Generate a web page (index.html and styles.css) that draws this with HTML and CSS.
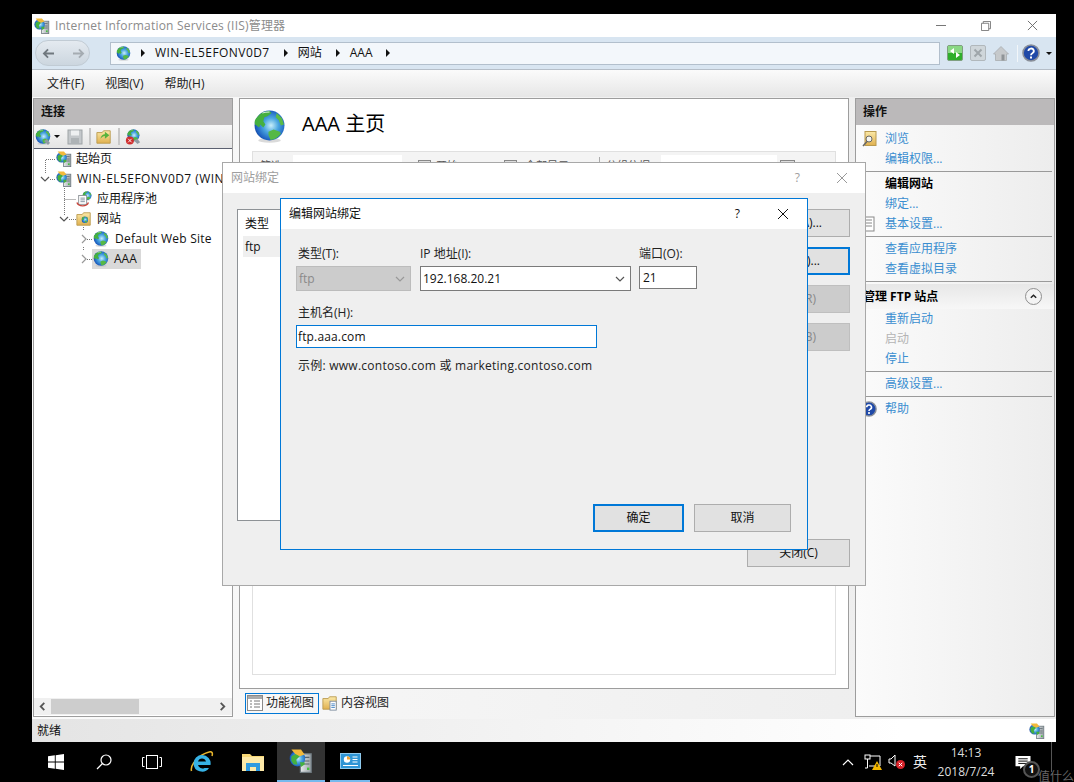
FILE: index.html
```html
<!DOCTYPE html>
<html lang="zh-CN">
<head>
<meta charset="utf-8">
<title>IIS</title>
<link rel="stylesheet" href="styles.css">
</head>
<body>
<svg class="defs" width="0" height="0" aria-hidden="true">
  <defs>
    <radialGradient id="gb" cx="0.55" cy="0.5" r="0.62">
      <stop offset="0" stop-color="#c8eef9"/><stop offset="0.4" stop-color="#4aa6e0"/><stop offset="0.8" stop-color="#1c5fc0"/><stop offset="1" stop-color="#12307e"/>
    </radialGradient>
    <linearGradient id="gf" x1="0" y1="0" x2="0" y2="1">
      <stop offset="0" stop-color="#fbe9a8"/><stop offset="1" stop-color="#e0b04e"/>
    </linearGradient>
    <linearGradient id="gs" x1="0" y1="0" x2="1" y2="0">
      <stop offset="0" stop-color="#e6eaec"/><stop offset="1" stop-color="#9aa2a6"/>
    </linearGradient>
    <symbol id="globe" viewBox="0 0 32 32">
      <ellipse cx="16" cy="29.500" rx="11" ry="2.200" fill="#bbb" opacity=".55"/>
      <circle cx="16" cy="15" r="14.500" fill="url(#gb)"/>
      <path d="M4 7c3-4 7-6 12-6l2 2-4 3-3 1-1 4 2 3-2 3-3-3-1 3-4-3C1 11 2 9 4 7z" fill="#45b03f"/>
      <path d="M15 21l5-2 6 2 1 2c-3 4-7 6-10 6l-2-5z" fill="#55b845"/>
      <path d="M23 3l5 5 2 6-3 1-2-5-3-3z" fill="#5abb47"/>
      <path d="M9 3c2-1 5-1 7-1" stroke="#d8f2e0" stroke-width="1" fill="none"/>
    </symbol>
    <symbol id="server" viewBox="0 0 20 20">
      <rect x="9.500" y="4" width="9" height="15.500" fill="url(#gs)" stroke="#6f7a80"/>
      <path d="M11 7h6M11 10h6M11 12.500h6" stroke="#59646b"/>
      <rect x="15" y="15.500" width="2" height="2" fill="#46c13e"/>
      <circle cx="7" cy="8" r="6.500" fill="url(#gb)"/>
      <path d="M2 6l4-2 3 2-3 3 1 4-3 0-2-3z" fill="#45b03f"/>
      <path d="M9 11l4 0 0 2-3 2z" fill="#45b03f"/>
      <path d="M2 0.500h8l3 4-4 1.500-4-2z" fill="#f3b93a"/>
    </symbol>
    <symbol id="folder" viewBox="0 0 18 18">
      <path d="M1 4h6l1.500-2H16v14H1z" fill="url(#gf)" stroke="#b99a4e"/>
    </symbol>
    <symbol id="close" viewBox="0 0 12 12">
      <path d="M1 1l10 10M11 1L1 11" fill="none" stroke="currentColor"/>
    </symbol>
    <symbol id="chev" viewBox="0 0 10 10">
      <path d="M1 3l4 4 4-4" fill="none" stroke="currentColor" stroke-width="1.200"/>
    </symbol>
    <symbol id="help" viewBox="0 0 18 18">
      <circle cx="9" cy="9" r="8" fill="#1f49a8" stroke="#8a8f98" stroke-width="1.600"/>
      <path d="M6.400 7a2.700 2.500 0 1 1 4 2.200C9.400 9.800 9 10.300 9 11.300" fill="none" stroke="#fff" stroke-width="1.800"/>
      <rect x="8" y="12.500" width="2" height="2" fill="#fff"/>
    </symbol>
  </defs>
</svg>

<div class="desktop">
  <main class="window">
    <header class="titlebar">
      <svg class="ico16"><use href="#server"/></svg>
      <span class="title-text">Internet Information Services (IIS)管理器</span>
      <div class="win-btns">
        <span class="min"></span>
        <svg class="restore" viewBox="0 0 11 11"><path d="M.5 2.500h8v8h-8zM2.500 2.500v-2h8v8h-2" fill="none" stroke="#777"/></svg>
        <svg class="x-btn"><use href="#close"/></svg>
      </div>
    </header>

    <nav class="navbar">
      <div class="backfwd">
        <svg viewBox="0 0 14 12" class="arrow"><path d="M13 6H2M6.500 1.500L2 6l4.500 4.500" fill="none" stroke="#70787f" stroke-width="2"/></svg>
        <svg viewBox="0 0 14 12" class="arrow"><path d="M1 6h11M7.500 1.500L12 6l-4.500 4.500" fill="none" stroke="#a5acb2" stroke-width="2"/></svg>
      </div>
      <div class="addr">
        <svg class="ico16 g"><use href="#globe"/></svg>
        <i class="tri"></i><span class="wide">WIN-EL5EFONV0D7</span>
        <i class="tri"></i><span>网站</span>
        <i class="tri"></i><span>AAA</span>
        <i class="tri"></i>
      </div>
      <div class="nav-tools">
        <svg class="tool" viewBox="0 0 16 16"><rect x=".5" y=".5" width="15" height="15" rx="1.500" fill="#2fae2b" stroke="#7f9f80"/><rect x="1" y="1" width="14" height="7" fill="#8ad884"/><path d="M7 3L3 6l4 3zM9 7l4 3-4 3z" fill="#fff"/></svg>
        <svg class="tool" viewBox="0 0 16 16"><rect x=".5" y=".5" width="15" height="15" rx="1.500" fill="#cfd6da" stroke="#b1b8bc"/><path d="M4.500 4.500l7 7M11.500 4.500l-7 7" stroke="#9fa6aa" stroke-width="2"/></svg>
        <svg class="tool home" viewBox="0 0 16 16"><path d="M8 1L0.500 8.500 2.500 8.500V15h11V8.500h2z" fill="#c6c9cb" stroke="#a9adb0" stroke-width=".8"/><rect x="8.500" y="9" width="3" height="6" fill="#8f9497"/></svg>
        <i class="tool-sep"></i>
        <svg class="help-nav"><use href="#help"/></svg>
        <i class="drop"></i>
      </div>
    </nav>

    <div class="menubar"><span>文件(F)</span><span>视图(V)</span><span>帮助(H)</span></div>

    <div class="workspace">
      <section class="left">
        <h2 class="panel-head">连接</h2>
        <div class="left-tools">
          <svg class="ico16"><use href="#globe"/><path d="M9 12l3-2 3 4-2 2z" fill="#8f9aa3"/></svg><i class="drop small"></i>
          <svg class="ico16 disk" viewBox="0 0 16 16"><rect x="1" y="1" width="14" height="14" fill="#c4c8cb" stroke="#9ea3a6"/><rect x="4" y="1.500" width="8" height="5" fill="#eef0f1"/><rect x="4" y="9" width="8" height="6" fill="#aeb3b6"/></svg>
          <i class="tool-sep grey"></i>
          <svg class="ico16" viewBox="0 0 18 18"><use href="#folder"/><path d="M5 11c1-4 3-5 5-5V3l5 4-5 4V8c-2 0-3 1-5 3z" fill="#56b33d"/></svg>
          <i class="tool-sep grey"></i>
          <svg class="ico16 conn" viewBox="0 0 18 18"><use href="#globe" width="15" height="15" x="2"/><path d="M10 13l4-2 3 4-3 2z" fill="#8f9aa3"/><circle cx="5.500" cy="13" r="4.500" fill="#cf2d2d"/><path d="M3.500 11l4 4M7.500 11l-4 4" stroke="#fff"/></svg>
        </div>
        <div class="tree">
          <svg class="tree-lines" width="120" height="120"><path d="M11.500 24V10.500H22M16 30.500h6M30.500 37v30M30.500 50.500H42M35 70.500h7M49.500 78v4M49.500 98v4M53 90.500h5M53 110.500h5" fill="none" stroke="#777" stroke-dasharray="1 1"/></svg>
          <div class="row l0 nc"><svg class="ico16"><use href="#server"/></svg><span>起始页</span></div>
          <div class="row l0"><svg class="tw"><use href="#chev"/></svg><svg class="ico16"><use href="#server"/></svg><span class="wide">WIN-EL5EFONV0D7 (WIN-EL5EFONV0D7\Administrator)</span></div>
          <div class="row l1 nc"><svg class="ico16" viewBox="0 0 18 18"><use href="#globe" x="7" width="11" height="11"/><rect x="3" y="5" width="9" height="10" fill="#fff" stroke="#8a8f94"/><path d="M5 8h5M5 10h5M5 12h5" stroke="#7a8a9a"/><path d="M1 13c2 5 11 5 13 0" fill="none" stroke="#c9443b" stroke-width="1.500"/></svg><span>应用程序池</span></div>
          <div class="row l1"><svg class="tw"><use href="#chev"/></svg><svg class="ico16" viewBox="0 0 18 18"><use href="#folder"/><use href="#globe" x="6" y="6" width="8" height="8"/></svg><span>网站</span></div>
          <div class="row l2"><svg class="tw side"><use href="#chev"/></svg><svg class="ico16"><use href="#globe"/></svg><span class="lt">Default Web Site</span></div>
          <div class="row l2"><svg class="tw side"><use href="#chev"/></svg><span class="selected"><svg class="ico16"><use href="#globe"/></svg><span>AAA</span></span></div>
        </div>
        <div class="hscroll">
          <svg class="sc-arrow" viewBox="0 0 8 10"><path d="M6 1L2 5l4 4" fill="none" stroke="#555" stroke-width="2"/></svg>
          <div class="sc-track"><div class="sc-thumb"></div></div>
          <svg class="sc-arrow" viewBox="0 0 8 10"><path d="M2 1l4 4-4 4" fill="none" stroke="#555" stroke-width="2"/></svg>
        </div>
      </section>

      <section class="center">
        <div class="center-panel">
          <div class="home-head">
            <svg class="big-globe"><use href="#globe"/></svg>
            <h1>AAA 主页</h1>
          </div>
          <div class="feature-box">
            <div class="filter">
              <span class="f-a">筛选:</span><i class="filter-input"></i><i class="f-box"></i><span class="f-b">开始(G)</span><i class="f-box"></i><span class="f-c">全部显示(A)</span><i class="f-sep"></i><span class="f-d">分组依据:</span><i class="filter-input short"></i><i class="f-box"></i>
            </div>
          </div>
        </div>
        <div class="tabs">
          <span class="tab active"><svg class="ico16" viewBox="0 0 16 16"><rect x=".5" y=".5" width="15" height="15" fill="#fff" stroke="#8a8a8a"/><rect x="1" y="1" width="14" height="3" fill="#aaa"/><path d="M3 6h2M3 9h2M3 12h2M7 6h6M7 9h6M7 12h6" stroke="#777"/></svg>功能视图</span>
          <span class="tab"><svg class="ico16" viewBox="0 0 18 18"><use href="#folder"/><rect x="9" y="7" width="7" height="10" fill="#fff" stroke="#7b8a9c"/><path d="M10.500 10h4M10.500 12h4M10.500 14h4" stroke="#3e7fc1"/></svg>内容视图</span>
        </div>
      </section>

      <aside class="right">
        <h2 class="panel-head">操作</h2>
        <div class="actions">
          <div class="act link"><svg class="act-ico" viewBox="0 0 16 16"><rect x="4" y="0.500" width="11" height="14" fill="url(#gf)" stroke="#b99a4e"/><circle cx="8" cy="8" r="3" fill="#f5f5f0" stroke="#666"/><path d="M6 10.500L2 15" stroke="#666" stroke-width="1.500"/></svg>浏览</div>
          <div class="act link">编辑权限...</div>
          <hr>
          <div class="act strong">编辑网站</div>
          <div class="act link">绑定...</div>
          <div class="act link"><svg class="act-ico" viewBox="0 0 16 16"><rect x="2" y="1" width="11" height="14" fill="#fff" stroke="#888"/><path d="M4 4h7M4 7h7M4 10h7" stroke="#888"/></svg>基本设置...</div>
          <hr>
          <div class="act link">查看应用程序</div>
          <div class="act link">查看虚拟目录</div>
          <hr>
          <div class="group-head"><span>管理 FTP 站点</span><i class="collapse"><svg viewBox="0 0 10 10"><path d="M2 6.500l3-3 3 3" fill="none" stroke="#222" stroke-width="1.600"/></svg></i></div>
          <div class="act link">重新启动</div>
          <div class="act disabled">启动</div>
          <div class="act link">停止</div>
          <hr>
          <div class="act link">高级设置...</div>
          <hr>
          <div class="act link"><svg class="act-ico"><use href="#help"/></svg>帮助</div>
        </div>
      </aside>
    </div>

    <footer class="status">
      <span>就绪</span>
      <svg class="ico16"><use href="#server"/></svg>
    </footer>
  </main>

  <div class="taskbar">
    <span class="cell"><svg class="tb16" viewBox="0 0 16 16"><path d="M0 2.300l6.800-1v6.300H0zM7.700 1.200L16 0v7.600H7.700zM0 8.400h6.800v6.300l-6.800-1zM7.700 8.400H16V16l-8.300-1.200z" fill="#fff"/></svg></span>
    <span class="cell"><svg class="tb16" viewBox="0 0 16 16"><circle cx="10" cy="6" r="5" fill="none" stroke="#fff" stroke-width="1.200"/><path d="M6.500 9.500L1 15" stroke="#fff" stroke-width="1.200"/></svg></span>
    <span class="cell"><svg class="tb20" viewBox="0 0 20 16"><rect x="4.500" y="1.500" width="11" height="13" fill="none" stroke="#fff"/><path d="M2.500 3.500h-2v9h2M17.500 3.500h2v9h-2" fill="none" stroke="#fff"/></svg></span>
    <span class="cell c-ie"><svg class="tb24" viewBox="0 0 24 24"><path d="M1.500 21C0 15 8 5 19 2c3-1 4 1 3 4" fill="none" stroke="#e8b52c" stroke-width="1.500"/><path d="M12 5a8.500 8.500 0 0 0-8.500 8.500A8.500 8.500 0 0 0 19 18h-4.500a4.500 4.500 0 0 1-6.500-3h12.500A8.500 8.500 0 0 0 12 5zM8 11.500a4.200 4.200 0 0 1 8 0z" fill="#37b3e6" fill-rule="evenodd"/></svg></span>
    <span class="cell c50"><svg class="tb22" viewBox="0 0 22 20"><path d="M0 2h8l2 2h12v15H0z" fill="#f8d775"/><path d="M0 5h22v14H0z" fill="#fde9a8"/><path d="M4 11h14v8h-4v-4H8v4H4z" fill="#2f9be0"/></svg></span>
    <span class="cell active"><svg class="tb24"><use href="#server"/></svg></span>
    <span class="cell running"><svg class="tb-ctl" viewBox="0 0 21 16"><rect x=".5" y=".5" width="20" height="15" fill="#2f95d5" stroke="#8fcaee"/><circle cx="7" cy="6.500" r="3.200" fill="#fff"/><path d="M7 6.500V3.300A3.200 3.200 0 0 1 10.200 6.500z" fill="#f0a030"/><path d="M12.500 4h5M12.500 6.500h5M12.500 9h5M3 12.500h15" stroke="#fff"/></svg></span>
    <div class="tray">
      <svg class="tray-chev" viewBox="0 0 12 8"><path d="M1 7l5-5 5 5" fill="none" stroke="#fff" stroke-width="1.200"/></svg>
      <svg class="tray-ico net" viewBox="0 0 18 16"><path d="M1 2h15v10H5" fill="none" stroke="#fff"/><rect x="1" y="1" width="5" height="4" fill="#000" stroke="#fff"/><path d="M3.500 5v9H1" fill="none" stroke="#fff"/><path d="M13 7l5 9H8z" fill="#f5b800"/><path d="M13 10v3" stroke="#000"/></svg>
      <svg class="tray-ico vol" viewBox="0 0 18 16"><path d="M1 5h2l4-4v11L3 9H1z" fill="none" stroke="#fff"/><circle cx="12.500" cy="10.500" r="4.500" fill="#d8232a"/><path d="M10.800 8.800l3.400 3.400M14.200 8.800l-3.400 3.400" stroke="#fff"/></svg>
      <span class="ime">英</span>
      <div class="clock"><span>14:13</span><span>2018/7/24</span></div>
      <svg class="tray-ico note" viewBox="0 0 16 16"><path d="M0 1h16v11H8l-3 3v-3H0z" fill="#fff"/><path d="M3 4h10M3 6.500h10M3 9h10" stroke="#000"/></svg>
    </div>
  </div>

  <i class="wm-line"></i>
  <div class="badge">1</div>
  <div class="watermark">值什么得</div>

  <section class="dialog back-dialog">
    <header class="dlg-title"><span>网站绑定</span><span class="dlg-q">?</span><svg class="dlg-x"><use href="#close"/></svg></header>
    <div class="back-body">
      <div class="bind-list">
        <div class="list-head">类型</div>
        <div class="list-row">ftp</div>
      </div>
      <div class="bind-side">
        <span class="d-btn b-a">添加(A)...</span>
        <span class="d-btn focus b-e">编辑(E)...</span>
        <span class="d-btn off">删除(R)</span>
        <span class="d-btn off">浏览(B)</span>
        <span class="d-btn close-btn">关闭(C)</span>
      </div>
    </div>
  </section>

  <section class="dialog edit-dialog">
    <header class="dlg-title"><span>编辑网站绑定</span><span class="dlg-q">?</span><svg class="dlg-x"><use href="#close"/></svg></header>
    <div class="edit-body">
      <div class="field-row">
        <label class="f-type"><span class="lbl">类型(T):</span><span class="select off">ftp<svg class="sel-chev"><use href="#chev"/></svg></span></label>
        <label class="f-ip"><span>IP 地址(I):</span><span class="select">192.168.20.21<svg class="sel-chev"><use href="#chev"/></svg></span></label>
        <label class="f-port"><span>端口(O):</span><span class="input">21</span></label>
      </div>
      <label class="f-host"><span class="lbl">主机名(H):</span><span class="input focus lt">ftp.aaa.com</span></label>
      <p class="sample lt">示例: www.contoso.com 或 marketing.contoso.com</p>
      <div class="dlg-actions"><span class="d-btn ok">确定</span><span class="d-btn cancel">取消</span></div>
    </div>
  </section>
</div>
</body>
</html>
```

FILE: styles.css
```css
* { box-sizing: border-box; }
html, body { margin: 0; padding: 0; background: #000; }
body { font: 12px/16px "Open Sans", "Noto Sans CJK SC", sans-serif; color: #111; overflow: hidden; }
.defs { position: absolute; }
h1, h2, p { margin: 0; font-weight: normal; }
i { font-style: normal; display: block; }
svg { display: block; flex: none; }
.lt { letter-spacing: .25px; }
.wide { letter-spacing: .45px; }
.desktop { position: relative; width: 1074px; height: 782px; padding-top: 14px; overflow: hidden; background: #000; display: flex; flex-direction: column; }
.ico16 { width: 16px; height: 16px; }

/* main window */
.window { width: 1024px; height: 728px; margin-left: 32px; background: #f4f4f4; display: flex; flex-direction: column; flex: none; }
.titlebar { height: 23px; background: #fff; display: flex; align-items: center; padding-left: 2px; flex: none; }
.title-text { margin-left: 5px; color: #8b8b8b; font-size: 12px; letter-spacing: .2px; }
.win-btns { margin-left: auto; display: flex; align-items: center; height: 23px; padding-right: 18px; }
.min { width: 10px; height: 1px; background: #777; }
.restore { width: 10px; height: 10px; margin-left: 35px; }
.x-btn { width: 11px; height: 11px; margin-left: 36px; color: #666; }

.navbar { height: 33px; background: #d8e5f1; border-bottom: 1px solid #b5bec8; display: flex; align-items: center; padding-left: 3px; flex: none; }
.backfwd { width: 55px; height: 26px; border-radius: 13px; background: linear-gradient(#e4eaf0, #ccd6df); border: 1px solid #c1cbd4; display: flex; align-items: center; justify-content: space-between; padding: 0 4px 0 6px; margin-right: 20px; }
.arrow { width: 13px; height: 11px; }
.addr { width: 830px; height: 23px; background: #f3f7fb; border: 1px solid #b2bfcc; display: flex; align-items: center; padding-left: 5px; color: #111; }
.addr .g { width: 15px; height: 15px; }
.tri { width: 0; height: 0; border-left: 4px solid #111; border-top: 4px solid transparent; border-bottom: 4px solid transparent; margin: 0 10px 0 10px; }
.addr span + .tri { margin-left: 14px; }
.nav-tools { display: flex; align-items: center; margin-left: 7px; }
.tool { width: 16px; height: 16px; margin-right: 7px; }
.tool.home { width: 16px; height: 17px; margin-right: 8px; }
.tool-sep { width: 1px; height: 17px; background: #f2f6f9; }
.tool-sep.grey { background: #c8c8c8; margin: 0 5px; width: 2px; }
.help-nav { width: 18px; height: 18px; margin-left: 4px; }
.drop { width: 0; height: 0; border-top: 3px solid #111; border-left: 3px solid transparent; border-right: 3px solid transparent; margin-left: 6px; }
.drop.small { margin: 0 7px 0 3px; }

.menubar { height: 27px; background: linear-gradient(#fbfbfb, #e6e6e6); display: flex; align-items: center; gap: 21px; padding-left: 15px; flex: none; color: #222; }

.workspace { flex: 1; display: flex; min-height: 0; background: linear-gradient(90deg, #fafafa, #ececec); padding: 1px 1px 2px 1px; gap: 6px; }
.panel-head { height: 26px; background: #bbb9ba; font-size: 12px; font-weight: bold; padding: 5px 0 0 7px; line-height: 16px; flex: none; }

.left { width: 200px; height: 100%; border: 1px solid #9d9d9d; background: #fff; display: flex; flex-direction: column; }
.left-tools { height: 24px; background: linear-gradient(#f8f8f8, #e4e4e4); border-bottom: 1px solid #5b6070; display: flex; align-items: center; padding-left: 1px; flex: none; }
.left-tools .tool-sep.grey { margin: 0 5px 0 6px; }
.tree { flex: 1; position: relative; padding-top: 0; overflow: hidden; }
.tree-lines { position: absolute; left: 0; top: 0; }
.row { height: 20px; display: flex; align-items: center; white-space: nowrap; position: relative; }
.row .ico16 { margin-right: 4px; }
.row.l0 { padding-left: 22px; }
.row.l0 .wide { margin-left: 1px; }
.row.l1.nc { padding-left: 42px; }
.row.l1 { padding-left: 25px; }
.row.l1 .tw { margin-right: 7px; }
.row.l1 .ico16 { margin-right: 5px; }
.row.l0 .tw { margin-left: -16px; margin-right: 6px; }
.row.l2 { padding-left: 45px; }
.row.l2 .tw { margin-right: 4px; }
.row.l2 .ico16 { margin-right: 6px; }
.tw { width: 10px; height: 10px; color: #555; margin-right: 4px; }
.tw.side { transform: rotate(-90deg); color: #999; }
.selected { display: flex; align-items: center; background: #d9d9d9; height: 20px; padding: 0 4px 0 1px; margin-left: -1px; }
.row.l2 .selected .ico16 { margin-right: 5px; }
.hscroll { height: 17px; background: #f0f0f0; display: flex; align-items: center; flex: none; margin-bottom: 1px; padding: 0 1px 0 0; }
.sc-arrow { width: 17px; height: 9px; }
.sc-track { flex: 1; height: 15px; }
.sc-thumb { width: 88px; height: 15px; background: #cdcdcd; }

.center { width: 610px; display: flex; flex-direction: column; }
.center-panel { height: 591px; background: #fff; border: 1px solid #9d9d9d; padding: 11px 12px 0; display: flex; flex-direction: column; flex: none; }
.home-head { height: 41px; display: flex; align-items: flex-start; padding-left: 1px; }
.big-globe { width: 33px; height: 33px; }
h1 { font-size: 20px; line-height: 28px; margin-left: 16px; color: #000; }
.feature-box { height: 524px; border: 1px solid #e0e0e0; }
.filter { height: 22px; background: #f4f4f4; display: flex; align-items: flex-start; padding: 3px 0 0 7px; font-size: 11px; color: #555; white-space: nowrap; }
.filter span { margin-top: 3px; }
.f-a { width: 33px; }
.filter-input { width: 109px; height: 16px; background: #fff; }
.f-box { width: 13px; height: 8px; margin: 5px 0 0 16px; border: 1px solid #888; background: #ddd; }
.f-b { width: 52px; margin-left: 5px; }
.f-c { margin-left: 8px; width: 68px; }
.f-sep { width: 1px; height: 12px; margin: 2px 6px 0 6px; background: #aaa; }
.f-d { width: 55px; }
.filter-input.short { width: 116px; }
.filter-input.short + .f-box { margin-left: 3px; width: 15px; }
.tabs { height: 28px; display: flex; align-items: center; padding: 0 0 0 6px; gap: 1px; }
.tab { display: flex; align-items: center; height: 21px; gap: 3px; padding: 0 4px 0 1px; border: 1px solid transparent; color: #222; }
.tab.active { border-color: #0078d7; }

.right { width: 200px; border: 1px solid #9d9d9d; background: linear-gradient(90deg, #fbfbfb, #ededed); display: flex; flex-direction: column; }
.actions { padding-top: 4px; }
.act { height: 20px; line-height: 20px; padding-left: 29px; position: relative; white-space: nowrap; }
.link { color: #3a8ed0; }
.strong { color: #000; font-weight: bold; }
.disabled { color: #b4b4b4; }
.actions hr { margin: 2px 2px 2px 0; border: 0; height: 1px; background: #9a9a9a; }
.act-ico { position: absolute; left: 5px; top: 2px; width: 16px; height: 16px; }
.group-head { height: 25px; background: linear-gradient(#e7e7e7, #f7f7f7); display: flex; align-items: center; justify-content: space-between; padding: 0 12px 0 7px; font-weight: bold; color: #000; margin: 2px 0 0 0; }
.collapse { width: 17px; height: 17px; border-radius: 50%; border: 1px solid #8f8f8f; background: #f3f3f3; padding: 3px; }

.status { height: 23px; background: linear-gradient(90deg, #e4e4e4, #fff 85%); display: flex; align-items: center; justify-content: space-between; padding: 0 11px 0 5px; flex: none; }

/* taskbar */
.taskbar { height: 40px; display: flex; align-items: stretch; padding-left: 32px; flex: none; color: #fff; background: #000; }
.cell { width: 48px; display: flex; align-items: center; justify-content: center; }
.cell.c50 { width: 50px; }
.cell.c-ie { width: 52px; }
.cell.c-ie + .c50 { width: 49px; }
.cell.active { background: #333; border-bottom: 2px solid #76b9ed; }
.cell.running { width: 40px; margin-left: 5px; border-bottom: 2px solid #76b9ed; }
.tb16 { width: 16px; height: 16px; }
.tb20 { width: 20px; height: 16px; }
.tb22 { width: 22px; height: 20px; }
.tb24 { width: 24px; height: 24px; }
.tb-ctl { width: 21px; height: 16px; }
.tray { margin-left: auto; display: flex; align-items: center; padding-right: 43px; }
.tray-chev { width: 12px; height: 8px; margin-right: 10px; }
.tray-ico { width: 18px; height: 16px; margin-right: 6px; }
.tray-ico.vol { margin-right: 7px; }
.ime { font-size: 14px; margin-right: 4px; width: 14px; color: #eee; }
.clock { width: 70px; display: flex; flex-direction: column; align-items: center; font-size: 12px; line-height: 19px; color: #ddd; margin-right: 14px; }
.tray-ico.note { width: 16px; height: 15px; margin: 0; }
.wm-line { position: absolute; left: 1051px; top: 742px; width: 1px; height: 30px; background: #555; }
.badge { position: absolute; left: 1023px; top: 761px; width: 17px; height: 17px; border-radius: 50%; border: 2px solid #555; background: #111; color: #fff; font: bold 10px/13px "Open Sans", sans-serif; text-align: center; }
.watermark { position: absolute; left: 1038px; top: 769px; color: #666; font-size: 12px; white-space: nowrap; }

/* dialogs */
.dialog { position: absolute; display: flex; flex-direction: column; background: #efefef; }
.dlg-title { background: #fff; display: flex; align-items: center; flex: none; }
.dlg-q { margin-left: auto; }
.back-dialog { left: 222px; top: 162px; width: 644px; height: 424px; border: 1px solid #a8a8a8; }
.back-dialog .dlg-title { height: 30px; padding: 0 17px 0 8px; color: #9e9e9e; }
.back-dialog .dlg-x { width: 12px; height: 12px; margin-left: 36px; color: #999; }
.back-body { flex: 1; display: flex; padding: 16px 15px 17px 14px; }
.bind-list { width: 100px; height: 312px; background: #fff; border: 1px solid #8e9296; padding: 2px 0 0 5px; }
.list-head { height: 24px; line-height: 23px; padding-left: 2px; }
.list-row { height: 21px; background: #efefef; padding-left: 2px; line-height: 21px; }
.bind-side { margin-left: auto; width: 103px; display: flex; flex-direction: column; gap: 10px; }
.d-btn { height: 28px; background: #e1e1e1; border: 1px solid #adadad; display: flex; align-items: center; justify-content: center; color: #111; }
.bind-side .d-btn { justify-content: flex-end; padding-right: 27px; width: 103px; white-space: nowrap; }
.bind-side .focus { border: 2px solid #0078d7; padding-right: 28px; }
.bind-side .off { background: #ccc; border-color: #bfbfbf; color: #888; padding-right: 33px; }
.bind-side .close-btn { margin-top: 178px; justify-content: center; padding-right: 0; }

.edit-dialog { left: 280px; top: 198px; width: 528px; height: 352px; border: 1px solid #0078d7; }
.edit-dialog .dlg-title { height: 30px; padding: 0 18px 0 8px; color: #111; }
.edit-dialog .dlg-x { width: 12px; height: 12px; margin-left: 37px; color: #111; }
.edit-body { flex: 1; display: flex; flex-direction: column; padding: 17px 16px 17px 15px; }
label { display: flex; flex-direction: column; gap: 4px; color: #222; }
.lbl { margin-left: 2px; }
.field-row { display: flex; gap: 9px; }
.f-type { width: 115px; }
.f-ip { width: 211px; }
.f-port { width: 58px; margin-left: -1px; }
.select { height: 25px; border: 1px solid #7a7a7a; background: #fff; display: flex; align-items: center; padding-left: 2px; justify-content: space-between; color: #111; padding-right: 5px; }
.select.off { background: #ccc; border-color: #bcbcbc; color: #8a8a8a; }
.sel-chev { width: 10px; height: 10px; color: #555; }
.select.off .sel-chev { color: #999; }
.input { height: 23px; border: 1px solid #7a7a7a; background: #fff; display: flex; align-items: center; padding-left: 3px; color: #111; }
.f-host { margin-top: 14px; width: 301px; }
.input.focus { border-color: #0078d7; padding-left: 1px; letter-spacing: .15px; }
.sample { margin: 10px 0 0 2px; color: #222; }
.dlg-actions { margin-top: auto; display: flex; justify-content: flex-end; gap: 10px; }
.d-btn.ok { width: 91px; border: 2px solid #0078d7; }
.d-btn.cancel { width: 97px; }
```
